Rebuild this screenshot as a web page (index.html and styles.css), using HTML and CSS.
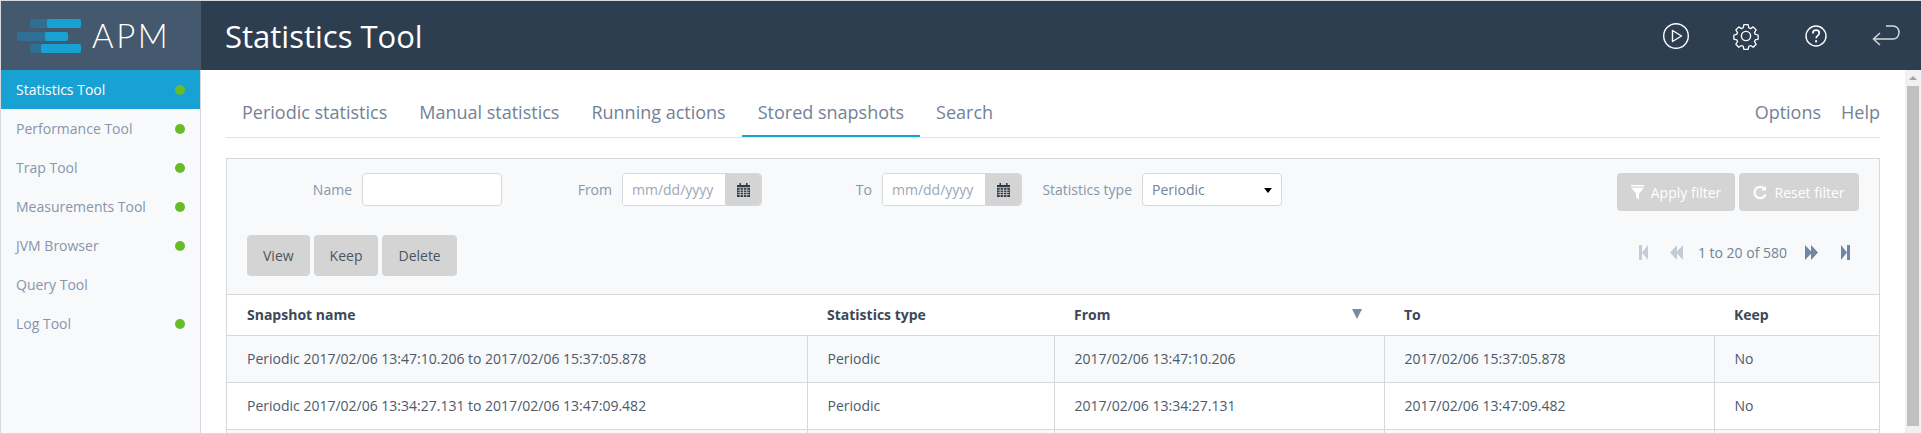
FILE: index.html
```html
<!DOCTYPE html>
<html lang="en">

<head>
  <meta charset="UTF-8">
  <title>APM - Statistics Tool</title>
  <link rel="stylesheet" href="styles.css">
</head>

<body>
  <div class="window">
    <!-- Top bar -->
    <header class="topbar">
      <div class="brand">
        <svg class="brand-mark" width="66" height="34" viewBox="0 0 66 34">
          <rect x="13" y="0" width="51" height="9" rx="2" fill="#2f6f93" />
          <rect x="30" y="0" width="34" height="9" rx="2" fill="#18a2d3" />
          <rect x="0" y="13" width="51" height="9" rx="2" fill="#2f6f93" />
          <rect x="28" y="13" width="23" height="9" rx="2" fill="#18a2d3" />
          <rect x="13" y="25" width="51" height="9" rx="2" fill="#2f6f93" />
          <rect x="24" y="25" width="40" height="9" rx="2" fill="#18a2d3" />
        </svg>
        <span class="brand-name">APM</span>
      </div>
      <div class="page-title">Statistics Tool</div>
      <div class="top-icons">
        <span class="top-icon">
          <svg width="28" height="28" viewBox="0 0 28 28" fill="none" stroke="#fff" stroke-width="1.4">
            <circle cx="14" cy="14" r="12.3" />
            <path d="M10.5 8.5 L19.5 14 L10.5 19.5 Z" stroke-linejoin="round" />
          </svg>
        </span>
        <span class="top-icon">
          <svg width="28" height="28" viewBox="0 0 28 28" fill="none" stroke="#fff" stroke-width="1.4" stroke-linejoin="round">
            <circle cx="14" cy="14" r="4.6" />
            <path d="M11.6 1.6h4.8l.7 3.4 2 .9 2.9-1.9 3.3 3.4-1.9 2.9.9 2 3.2.7v4.7l-3.2.7-.9 2 1.9 2.9-3.3 3.3-2.9-1.9-2 .9-.7 3.4h-4.8l-.7-3.4-2-.9-2.9 1.9-3.3-3.3 1.9-2.9-.9-2-3.2-.7v-4.7l3.2-.7.9-2-1.9-2.9 3.3-3.4 2.9 1.9 2-.9z" transform="translate(1.4 1.3) scale(.9)" />
          </svg>
        </span>
        <span class="top-icon">
          <svg width="24" height="24" viewBox="0 0 24 24" fill="none" stroke="#fff" stroke-width="1.4">
            <circle cx="12" cy="12" r="10" />
            <path d="M8.8 9.4c0-2 1.500-3.200 3.300-3.200 1.800 0 3.200 1.100 3.200 2.900 0 2.500-3.200 2.600-3.200 5.200" stroke-width="1.7" />
            <path d="M12.100 16.200v2.200" stroke-width="1.9" />
          </svg>
        </span>
        <span class="top-icon">
          <svg width="28" height="22" viewBox="0 0 28 22" fill="none" stroke="#d5dade" stroke-width="1.5">
            <path d="M14 1 H21 C24.500 1 27 3.800 27 7.500 C27 11.200 24.500 14 21 14 H2" />
            <path d="M8 8 L1.500 14 L8 20" />
          </svg>
        </span>
      </div>
    </header>

    <div class="body-row">
      <!-- Tool list -->
      <nav class="sidebar">
        <a class="tool active">Statistics Tool<i class="dot"></i></a>
        <a class="tool">Performance Tool<i class="dot"></i></a>
        <a class="tool">Trap Tool<i class="dot"></i></a>
        <a class="tool">Measurements Tool<i class="dot"></i></a>
        <a class="tool">JVM Browser<i class="dot"></i></a>
        <a class="tool">Query Tool</a>
        <a class="tool">Log Tool<i class="dot"></i></a>
      </nav>

      <main class="content">
        <div class="tabs">
          <a class="tab">Periodic statistics</a>
          <a class="tab">Manual statistics</a>
          <a class="tab">Running actions</a>
          <a class="tab active">Stored snapshots</a>
          <a class="tab">Search</a>
          <a class="tab-link first">Options</a>
          <a class="tab-link">Help</a>
        </div>

        <div class="panel">
          <!-- Filters -->
          <div class="toolbar">
            <div class="filter-row">
              <div class="field">
                <label>Name</label>
                <input class="text-input" type="text">
              </div>
              <div class="field">
                <label>From</label>
                <div class="date-input">
                  <input type="text" placeholder="mm/dd/yyyy">
                  <span class="date-btn">
                    <svg width="13" height="14" viewBox="0 0 13 14">
                      <path fill="#2f3a46" d="M0 2h2.500V0h1.500v2h5V0h1.500v2H13v12H0z" />
                      <path stroke="#d4d4d4" stroke-width=".8" d="M0 4.600h13M.5 7.200h12M.5 9.400h12M.5 11.600h12M3.200 5v9M6.500 5v9M9.800 5v9" />
                    </svg>
                  </span>
                </div>
              </div>
              <div class="field">
                <label>To</label>
                <div class="date-input">
                  <input type="text" placeholder="mm/dd/yyyy">
                  <span class="date-btn">
                    <svg width="13" height="14" viewBox="0 0 13 14">
                      <path fill="#2f3a46" d="M0 2h2.500V0h1.500v2h5V0h1.500v2H13v12H0z" />
                      <path stroke="#d4d4d4" stroke-width=".8" d="M0 4.600h13M.5 7.200h12M.5 9.400h12M.5 11.600h12M3.200 5v9M6.500 5v9M9.800 5v9" />
                    </svg>
                  </span>
                </div>
              </div>
              <div class="field">
                <label>Statistics type</label>
                <div class="select-box">Periodic</div>
              </div>
              <div class="filter-actions">
                <button class="btn-filter" type="button">
                  <svg width="13" height="15" viewBox="0 0 13 15" fill="#fff">
                    <path d="M0 0h13v1.400H0zM0 2.800h13L8 8.500V15l-3-3V8.500z" />
                  </svg>
                  Apply filter
                </button>
                <button class="btn-filter" type="button">
                  <svg width="14" height="15" viewBox="0 0 14 15" fill="none" stroke="#fff" stroke-width="2.200">
                    <path d="M12 4.400A5.700 5.700 0 1 0 12.600 9.400" />
                    <path d="M13 .8v4.800H8.200z" fill="#fff" stroke="none" />
                  </svg>
                  Reset filter
                </button>
              </div>
            </div>

            <div class="action-row">
              <button class="btn-action" type="button">View</button>
              <button class="btn-action" type="button">Keep</button>
              <button class="btn-action" type="button">Delete</button>
              <div class="pager">
                <svg class="pager-first" width="9" height="15" viewBox="0 0 9 15" fill="#c3ccd5">
                  <path d="M0 0h3v15H0zM9 0v15L3 7.500z" />
                </svg>
                <svg class="pager-prev" width="13" height="15" viewBox="0 0 13 15" fill="#c3ccd5">
                  <path d="M7 0v15L0 7.500zM13 0v15L6 7.500z" />
                </svg>
                <span class="pager-text">1 to 20 of 580</span>
                <svg class="pager-next" width="13" height="15" viewBox="0 0 13 15" fill="#6f87a3">
                  <path d="M0 0v15l7-7.500zM6 0v15l7-7.500z" />
                </svg>
                <svg class="pager-last" width="9" height="15" viewBox="0 0 9 15" fill="#6f87a3">
                  <path d="M0 0v15l6-7.500zM6 0h3v15H6z" />
                </svg>
              </div>
            </div>
          </div>

          <table class="snapshots">
            <colgroup>
              <col class="col-name">
              <col class="col-type">
              <col class="col-from">
              <col class="col-to">
              <col class="col-keep">
            </colgroup>
            <thead>
              <tr>
                <th>Snapshot name</th>
                <th>Statistics type</th>
                <th>
                  <div class="sort-head">From <i class="sort-arrow"></i></div>
                </th>
                <th>To</th>
                <th>Keep</th>
              </tr>
            </thead>
            <tbody>
              <tr>
                <td>Periodic 2017/02/06 13:47:10.206 to 2017/02/06 15:37:05.878</td>
                <td>Periodic</td>
                <td>2017/02/06 13:47:10.206</td>
                <td>2017/02/06 15:37:05.878</td>
                <td>No</td>
              </tr>
              <tr>
                <td>Periodic 2017/02/06 13:34:27.131 to 2017/02/06 13:47:09.482</td>
                <td>Periodic</td>
                <td>2017/02/06 13:34:27.131</td>
                <td>2017/02/06 13:47:09.482</td>
                <td>No</td>
              </tr>
              <tr>
                <td>&nbsp;</td>
                <td>&nbsp;</td>
                <td>&nbsp;</td>
                <td>&nbsp;</td>
                <td>&nbsp;</td>
              </tr>
            </tbody>
          </table>
        </div>
      </main>

      <!-- Page scrollbar -->
      <div class="scrollbar">
        <div class="scroll-up"></div>
        <div class="scroll-thumb"></div>
      </div>
    </div>
  </div>
</body>

</html>
```
FILE: styles.css
```css
/* Page frame */
html,
body {
  margin: 0;
  height: 100%;
  overflow: hidden;
}

body {
  font-family: "Open Sans", Arial, sans-serif;
  font-size: 14px;
  color: #4b5a6b;
  background-color: #fff;
}

.window {
  display: flex;
  flex-direction: column;
  height: 434px;
  box-sizing: border-box;
  border: 1px solid #d6dade;
}

/* Top bar */
.topbar {
  display: flex;
  align-items: center;
  flex: 0 0 69px;
  background-color: #2d3e50;
  color: #fff;
}

.brand {
  display: flex;
  align-items: center;
  width: 200px;
  height: 100%;
  box-sizing: border-box;
  padding: 0 0 0 16px;
  background-color: #44586e;
}

.brand-mark {
  margin-right: 9px;
}

.brand-name {
  font-family: Lato, sans-serif;
  font-weight: 300;
  font-size: 33px;
  letter-spacing: 2.500px;
  line-height: 1;
}

.page-title {
  margin-left: 24px;
  font-size: 31px;
}

.top-icons {
  display: flex;
  margin-left: auto;
}

.top-icon {
  display: flex;
  align-items: center;
  justify-content: center;
  width: 70px;
  height: 30px;
}

.body-row {
  display: flex;
  flex: 1;
  min-height: 0;
}

/* Tool list */
.sidebar {
  flex: 0 0 199px;
  border-right: 1px solid #d6dade;
  background-color: #f8f9fb;
}

.tool {
  display: flex;
  align-items: center;
  justify-content: space-between;
  height: 39px;
  padding: 0 15px;
  color: #8796aa;
}

.tool.active {
  background-color: #18a2d3;
  color: #fff;
}

.dot {
  width: 10px;
  height: 10px;
  border-radius: 50%;
  background-color: #68bb29;
}

/* Tabs */
.content {
  flex: 1;
  min-width: 0;
  padding: 0 25px;
  overflow: hidden;
}

.tabs {
  display: flex;
  margin-top: 20px;
  border-bottom: 1px solid #e2e5e8;
  font-size: 18px;
  line-height: 25px;
}

.tab {
  padding: 10px 16px 12px;
  color: #728297;
}

.tab.active {
  padding-bottom: 10px;
  border-bottom: 2px solid #18a2d3;
}

.tab-link {
  padding: 10px 0 12px 20px;
  color: #728297;
}

.tab-link.first {
  margin-left: auto;
}

/* Filter panel */
.panel {
  width: 1654px;
  box-sizing: border-box;
  margin-top: 20px;
  border: 1px solid #d6d8da;
}

.toolbar {
  height: 136px;
  box-sizing: border-box;
  padding: 14px 20px 0 15px;
  background-color: #f8f9fb;
  border-bottom: 1px solid #d6d8da;
}

.filter-row {
  display: flex;
  align-items: flex-start;
}

.field {
  display: flex;
  align-items: center;
  justify-content: flex-end;
  flex: 0 0 260px;
  gap: 10px;
  color: #8796aa;
}

.text-input,
.select-box,
.date-input {
  width: 140px;
  height: 33px;
  box-sizing: border-box;
  border: 1px solid #d6d8da;
  border-radius: 4px;
  background-color: #fff;
}

.date-input {
  display: flex;
  overflow: hidden;
}

.date-input input {
  width: 102px;
  box-sizing: border-box;
  padding: 0 0 0 9px;
  border: none;
  outline: none;
  font: inherit;
}

.date-input input::placeholder {
  color: #9aa8b8;
  opacity: 1;
}

.date-btn {
  display: flex;
  align-items: center;
  justify-content: center;
  flex: 1;
  background-color: #d4d4d4;
}

.select-box {
  position: relative;
  padding: 0 9px;
  line-height: 31px;
  color: #728297;
}

/* caret of the type picker */
.select-box::after {
  content: "";
  position: absolute;
  right: 9px;
  top: 14px;
  border-left: 4.500px solid transparent;
  border-right: 4.500px solid transparent;
  border-top: 5px solid #000;
}

.filter-actions {
  display: flex;
  gap: 4px;
  margin-left: auto;
}

.btn-filter {
  display: flex;
  align-items: center;
  justify-content: center;
  gap: 7px;
  height: 38px;
  padding: 0;
  border: none;
  border-radius: 4px;
  background-color: #d4d4d4;
  font: inherit;
  color: #fff;
  width: 118px;
}

.btn-filter + .btn-filter {
  width: 120px;
}

.action-row {
  display: flex;
  align-items: center;
  gap: 4px;
  margin: 24px 0 0 5px;
}

.btn-action {
  height: 41px;
  padding: 0 16px;
  border: none;
  border-radius: 4px;
  background-color: #d4d4d4;
  font: inherit;
  color: #4b5560;
}

.pager {
  display: flex;
  align-items: center;
  margin: -6px 9px 0 auto;
  color: #728297;
}

.pager-prev {
  margin: 0 15px 0 22px;
}

.pager-next {
  margin: 0 23px 0 18px;
}

/* Snapshot table */
.snapshots {
  width: 100%;
  table-layout: fixed;
  border-collapse: collapse;
}

.col-name {
  width: 580px;
}

.col-type {
  width: 247px;
}

.col-from,
.col-to {
  width: 330px;
}

.snapshots th {
  height: 38px;
  padding: 0 20px 2px;
  border-bottom: 1px solid #d6d8da;
  text-align: left;
  font-weight: 700;
  color: #3c4858;
}

.snapshots td {
  height: 44px;
  padding: 0 20px 2px;
  border-bottom: 1px solid #d6d8da;
  border-left: 1px solid #d6d8da;
}

.snapshots td:first-child {
  border-left: none;
}

.snapshots tbody tr:nth-child(odd) {
  background-color: #f8f9fb;
}

.sort-head {
  display: flex;
  align-items: center;
  justify-content: space-between;
}

.sort-arrow {
  margin-right: 2px;
  border-left: 5px solid transparent;
  border-right: 5px solid transparent;
  border-top: 10px solid #7b8aa0;
}

/* Scrollbar */
.scrollbar {
  flex: 0 0 16px;
  background-color: #f1f1f1;
}

.scroll-up {
  width: 0;
  margin: 6px auto 6px;
  border-left: 4px solid transparent;
  border-right: 4px solid transparent;
  border-bottom: 4px solid #a3a3a3;
}

.scroll-thumb {
  height: 340px;
  margin: 0 2px 0 2px;
  background-color: #c1c1c1;
}
```
